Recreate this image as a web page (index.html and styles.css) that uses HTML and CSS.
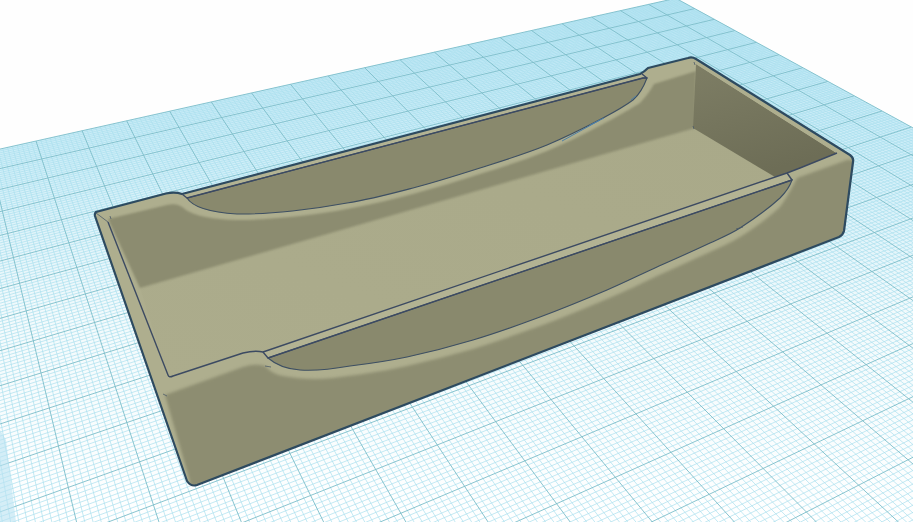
FILE: index.html
```html
<!DOCTYPE html>
<html lang="en">
<head>
<meta charset="utf-8">
<title>Workplane</title>
<link rel="stylesheet" href="styles.css">
</head>
<body>
<main class="scene">
<svg class="view" viewBox="0 0 913 522" width="913" height="522" role="img" aria-label="3D tray on a workplane grid">
  <defs>
    <linearGradient id="endwall" x1="0" y1="0" x2="0.4" y2="1">
      <stop offset="0" stop-color="#7e7e65"/>
      <stop offset="1" stop-color="#6d6d56"/>
    </linearGradient>
    <linearGradient id="floor" x1="0" y1="1" x2="1" y2="0">
      <stop offset="0" stop-color="#acac8c"/>
      <stop offset="1" stop-color="#a9a989"/>
    </linearGradient>
    <linearGradient id="tint" gradientUnits="userSpaceOnUse" x1="0" y1="0" x2="0" y2="522">
      <stop offset="0" stop-color="#bce6f5"/>
      <stop offset="0.3" stop-color="#cfeef8"/>
      <stop offset="0.6" stop-color="#f2fafc"/>
      <stop offset="1" stop-color="#ffffff"/>
    </linearGradient>
    <clipPath id="silhouette">
      <path d="M96 212 L166 193.500 Q175 191.500 182 194 L640 74 Q644 72 648 68 L688 58 Q692 56.500 696 59 L850 155 Q854 158 853 162 L844 231 Q843 235 839 237 L197 485 Q191 487 187 481 L95 216 Q94.500 213 96 212 Z"/>
    </clipPath>
  </defs>

  <g class="plane">
    <path id="tint-area" fill="url(#tint)" d=""/>
    <path id="minor" class="minor" d=""/>
    <path id="major" class="major" d=""/>
    <polygon class="moire" points="0,430 6,440 16,522 0,522"/>
  </g>

  <path class="body" d="M96 212 L166 193.500 Q175 191.500 182 194 L640 74 Q644 72 648 68 L688 58 Q692 56.500 696 59 L850 155 Q854 158 853 162 L844 231 Q843 235 839 237 L197 485 Q191 487 187 481 L95 216 Q94.500 213 96 212 Z"/>

  <g clip-path="url(#silhouette)">
    <path class="face" d="M165 395 L243 367 Q255 363 265 366 Q272 374 283 376 C300 379 315 380 333 378 C350 376 369 373 388 370 L407 366 C429 361 451 355 473 349 C495 342 518 334 540 326 C562 318 585 308 607 299 C624 292 640 284 657 276 C675 268 692 260 710 252 C720 247 730 243 740 237 C753 229 767 219 780 207 C786 199 792 188 797 178 L847 160 L862 160 L852 245 L193 500 L189 478 Z"/>
  </g>

  <path class="floor" fill="url(#floor)" d="M140 288 L693 128 L775 177 L263 352 Q255 350 243 353 L173 376 Q169 378 168 377 Z"/>
  <path class="wall" d="M108 219 L167 205 Q178 202 186 210 Q200 219 237 220 C270 220 315 215 347 209 C369 205 391 200 413 194 C435 188 458 181 480 174 C502 167 525 160 547 151 C566 143 585 134 603 124 C613 119 625 112 640 103 Q650 92 654 84 L696 71 L695 128 L140 288 Z"/>
  <path class="endwall" fill="url(#endwall)" d="M696 64 L837 153 L800 168 L787 173 L775 177 L693 128 Z"/>
  <path class="rim-soft" d="M695 63 L837 153"/>

  <path class="band" d="M182 194 L642 74 L647 78 L643 78 L187 198 Z"/>
  <path class="band" d="M263 352 L787 173 L792 180 L268 358 Z"/>

  <path class="cut" d="M187 198 C192 206 205 212 237 214 C270 214.500 315 209 347 203 C369 199.700 391 193.800 413 188 C435 182.200 458 175 480 168 C502 161 525 154 547 145 C566 137 585 127.500 603 118 C613 112.700 625 106 633 100 C640 94 644 86 647 78 L643 78 Z"/>
  <path class="cut" d="M268 358 C275 364 285 369 300 370 C315 371 333 369 350 366 C369 363.700 388 361 407 357 C429 352.300 451 346.600 473 340 C495 333.400 518 325.200 540 317 C562 308.800 585 299.400 607 290 C624 282.800 640 274.700 657 267 C675 259 692 251.500 710 243 C720 238.300 730 234.400 740 228 C753 219.600 767 210 780 198 C786 192 790 186 792 180 Z"/>

  <path class="outline" d="M96 212 L166 193.500 Q175 191.500 182 194 L640 74 Q644 72 648 68 L688 58 Q692 56.500 696 59 L850 155 Q854 158 853 162 L844 231 Q843 235 839 237 L197 485 Q191 487 187 481 L95 216 Q94.500 213 96 212 Z"/>

  <path class="edge" d="M108 222 L168 375 Q169 378 173 376 L243 353 Q255 350 263 352 L787 173 L800 168 L837 153"/>
  <path class="edge" d="M263 352 L268 358 L792 180 L787 173"/>
  <path class="edge" d="M182 194 L187 198 L643 78 L647 78 L642 74"/>

  <path class="tick" d="M96 213 L108 222 M110 216 L111 219 M163 394 L167 396 M265 366 L271 367 M736 229 L743 227 M693 126 L694 129 M694 62 L695 65"/>
  <path class="tick blue" d="M562 141 L600 120 M590 125 L604 118 M631 100 L636 96"/>
</svg>
</main>
<script src="grid.js"></script>
</body>
</html>
```

FILE: styles.css
```css
html, body {
  margin: 0;
  padding: 0;
  background: #fefefe;
}

.scene {
  width: 913px;
  height: 522px;
  overflow: hidden;
}

.view {
  display: block;
}

.plane {
  filter: blur(0.35px);
}

.minor {
  fill: none;
  stroke: #abdfee;
  stroke-width: 0.7;
}

.major {
  fill: none;
  stroke: #7cbdc9;
  stroke-width: 0.9;
}

.moire {
  fill: #b9e3f1;
  opacity: 0.6;
}

.body {
  fill: #aeae8e;
}

.face {
  fill: #8d8d71;
  filter: blur(1.5px);
}

.wall {
  fill: #8c8c70;
  filter: blur(1px);
}

.rim-soft {
  fill: none;
  stroke: #b0b090;
  stroke-width: 1;
}

.band {
  fill: #b3b393;
}

.cut {
  fill: #89896d;
  stroke: #3d4f63;
  stroke-width: 1.1;
}

.outline {
  fill: none;
  stroke: #2d4a60;
  stroke-width: 2.2;
  stroke-linejoin: round;
}

.edge {
  fill: none;
  stroke: #3c4a62;
  stroke-width: 1.4;
  stroke-linejoin: round;
}

.tick {
  fill: none;
  stroke: #4b5a68;
  stroke-width: 0.8;
}

.tick.blue {
  stroke: #4d7fa6;
  stroke-width: 1;
}
```

FILE: grid.js
```js
// Projects the square workplane grid into the view with a homography.
(function () {
  var G = 0.0178, W = 0.0291;
  var U_MIN = -4, U_MAX = 18, V_MAX = 24, DIV = 10;

  function project(u, v) {
    var d = G * u - W * v + 1;
    var x = (2673 * G * u + 157 * W * v + 36) / d;
    var y = (-447 * G * u + 457 * W * v + 141) / d;
    return x.toFixed(1) + ' ' + y.toFixed(1);
  }

  function seg(u0, v0, u1, v1) {
    return 'M' + project(u0, v0) + 'L' + project(u1, v1);
  }

  var minor = '', major = '', i;
  for (i = U_MIN * DIV; i <= U_MAX * DIV; i++) {
    var line = seg(i / DIV, 0, i / DIV, V_MAX);
    if (i % DIV === 0) { major += line; } else { minor += line; }
  }
  for (i = 0; i <= V_MAX * DIV; i++) {
    var cross = seg(U_MIN, i / DIV, U_MAX, i / DIV);
    if (i % DIV === 0) { major += cross; } else { minor += cross; }
  }
  document.getElementById('minor').setAttribute('d', minor);
  document.getElementById('major').setAttribute('d', major);
  document.getElementById('tint-area').setAttribute('d',
    'M' + project(U_MIN, 0) + 'L' + project(U_MAX, 0) +
    'L' + project(U_MAX, V_MAX) + 'L' + project(U_MIN, V_MAX) + 'Z');
})();
```
